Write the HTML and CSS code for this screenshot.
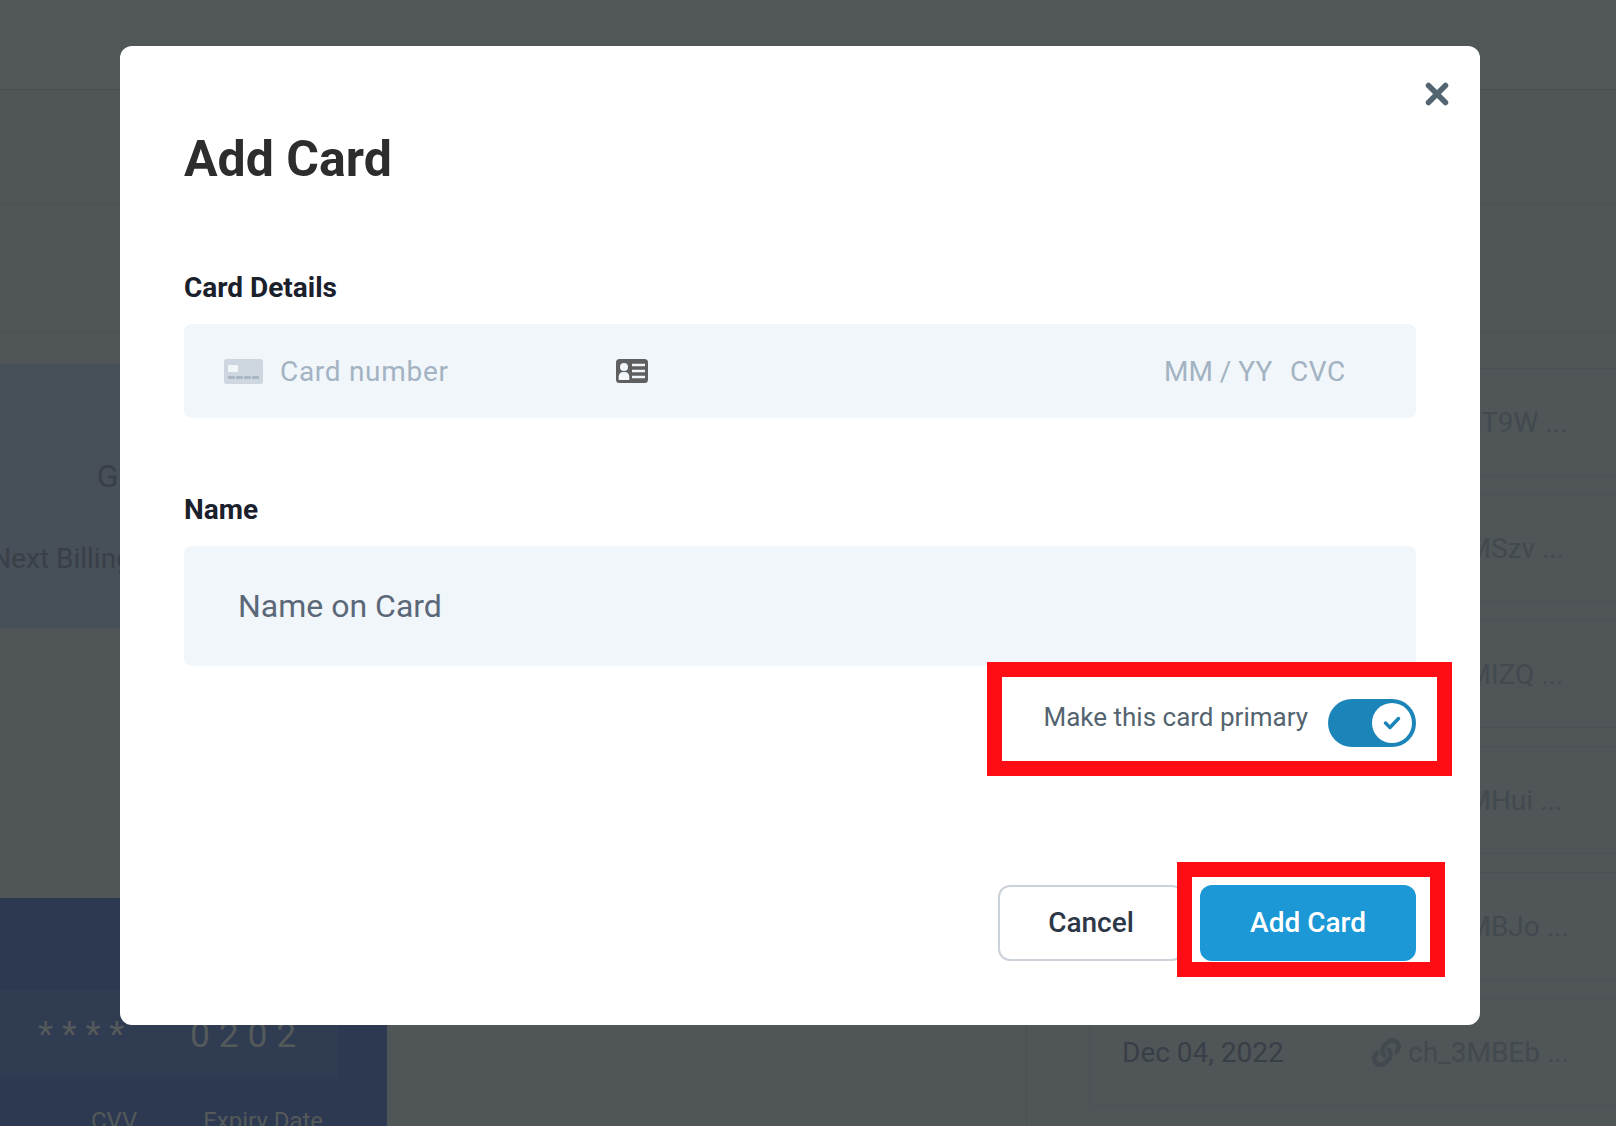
FILE: index.html
```html
<!DOCTYPE html>
<html lang="en">
<head>
<meta charset="utf-8">
<title>Add Card</title>
<link rel="stylesheet" href="styles.css">
</head>
<body>
<div class="page">
  <header class="topbar"></header>
  <div class="band band-one"></div>
  <div class="band band-two"></div>
  <main class="columns">
    <section class="left">
      <div class="plan">
        <div class="plan-name">Growth Plan</div>
        <div class="plan-next">Next Billing Date: Dec 04, 2022</div>
      </div>
      <div class="bank-card">
        <div class="card-digits"><span class="stars">* * * *</span><span class="last">0 2 0 2</span></div>
        <div class="card-meta"><span>CVV</span><span>Expiry Date</span></div>
      </div>
    </section>
    <section class="middle"></section>
    <section class="right">
      <div class="rows">
        <div class="row"><span class="date">Dec 04, 2022</span><span class="charge"><svg class="link" viewBox="0 0 512 512"><use href="#link-icon"/></svg>ch_3cT9W ...</span></div>
        <div class="row"><span class="date">Dec 04, 2022</span><span class="charge"><svg class="link" viewBox="0 0 512 512"><use href="#link-icon"/></svg>ch_3MSzv ...</span></div>
        <div class="row"><span class="date">Dec 04, 2022</span><span class="charge"><svg class="link" viewBox="0 0 512 512"><use href="#link-icon"/></svg>ch_3MIZQ ...</span></div>
        <div class="row"><span class="date">Dec 04, 2022</span><span class="charge"><svg class="link" viewBox="0 0 512 512"><use href="#link-icon"/></svg>ch_3MHui ...</span></div>
        <div class="row"><span class="date">Dec 04, 2022</span><span class="charge"><svg class="link" viewBox="0 0 512 512"><use href="#link-icon"/></svg>ch_3MBJo ...</span></div>
        <div class="row"><span class="date">Dec 04, 2022</span><span class="charge"><svg class="link" viewBox="0 0 512 512"><path id="link-icon" d="M326.612 185.391c59.747 59.809 58.927 155.698.36 214.59-.11.12-.24.25-.36.37l-67.2 67.2c-59.27 59.27-155.699 59.262-214.96 0-59.27-59.26-59.27-155.7 0-214.96l37.106-37.106c9.84-9.84 26.786-3.3 27.294 10.606.648 17.722 3.826 35.527 9.69 52.721 1.986 5.822.567 12.262-3.783 16.612l-13.087 13.087c-28.026 28.026-28.905 73.66-1.155 101.96 28.024 28.579 74.086 28.749 102.325.51l67.2-67.19c28.191-28.191 28.073-73.757 0-101.83-3.701-3.694-7.429-6.564-10.341-8.569a16.037 16.037 0 0 1-6.947-12.606c-.396-10.567 3.348-21.456 11.698-29.806l21.054-21.055c5.521-5.521 14.182-6.199 20.584-1.731a152.482 152.482 0 0 1 20.522 17.197zM467.547 44.449c-59.261-59.262-155.69-59.27-214.96 0l-67.2 67.2c-.12.12-.25.25-.36.37-58.566 58.892-59.387 154.781.36 214.59a152.454 152.454 0 0 0 20.521 17.196c6.402 4.468 15.064 3.789 20.584-1.731l21.054-21.055c8.35-8.35 12.094-19.239 11.698-29.806a16.037 16.037 0 0 0-6.947-12.606c-2.912-2.005-6.64-4.875-10.341-8.569-28.073-28.073-28.191-73.639 0-101.83l67.2-67.19c28.239-28.239 74.3-28.069 102.325.51 27.75 28.3 26.872 73.934-1.155 101.96l-13.087 13.087c-4.35 4.35-5.769 10.79-3.783 16.612 5.864 17.194 9.042 34.999 9.69 52.721.509 13.906 17.454 20.446 27.294 10.606l37.106-37.106c59.271-59.259 59.271-155.699.001-214.959z"/></svg>ch_3MBEb ...</span></div>
      </div>
    </section>
  </main>
</div>

<div class="overlay">
  <div class="modal">
    <svg class="close" viewBox="0 0 24 24"><path d="M3.500 3.500 20.500 20.500M20.500 3.500 3.500 20.500"/></svg>
    <h1 class="title">Add Card</h1>
    <div class="label label-card">Card Details</div>
    <div class="card-field">
      <svg class="brand" viewBox="0 0 39 25">
        <rect class="brand-bg" width="39" height="25" rx="2.500"/>
        <rect class="brand-chip" x="4" y="6" width="10" height="7" rx="0.500"/>
        <path class="brand-dash" d="M4 18.500h6.700M12 18.500h6.700M20 18.500h6.700M28 18.500h7"/>
      </svg>
      <span class="ph ph-number">Card number</span>
      <svg class="autofill" viewBox="0 0 32 24">
        <rect class="autofill-bg" width="32" height="24" rx="3.500"/>
        <circle class="autofill-fg" cx="8" cy="8" r="4"/>
        <path class="autofill-fg" d="M2.700 21v-3.500c0-2.500 2-4.500 4.500-4.500h1.600c2.500 0 4.500 2 4.500 4.500V21z"/>
        <path class="autofill-line" d="M16 6h13M16 12h13M16 18h13"/>
      </svg>
      <span class="ph ph-date">MM / YY</span>
      <span class="ph ph-cvc">CVC</span>
    </div>
    <div class="label label-name">Name</div>
    <div class="name-field">Name on Card</div>
    <div class="primary-row">
      <span class="primary-text">Make this card primary</span>
      <span class="toggle"><span class="knob"><svg class="tick" viewBox="0 0 18 14"><path d="M2.500 7 7 11.500 15.500 2.500"/></svg></span></span>
    </div>
    <div class="actions">
      <button class="btn btn-cancel" type="button">Cancel</button>
      <button class="btn btn-add" type="button">Add Card</button>
    </div>
    <div class="mark mark-primary"></div>
    <div class="mark mark-add"></div>
  </div>
</div>
</body>
</html>
```
FILE: styles.css
```css
* { box-sizing: border-box; }
html, body { margin: 0; padding: 0; height: 100%; overflow: hidden; }
body { font-family: Roboto, "Liberation Sans", sans-serif; background: #505558; color: #383f47; }

.page { width: 1616px; height: 1126px; display: flex; flex-direction: column; overflow: hidden; }
.topbar { height: 90px; flex: none; background: #515659; border-bottom: 1px solid #4b5053; }
.band { flex: none; border-bottom: 1px solid #4b5053; background: #505558; }
.band-one { height: 115px; }
.band-two { height: 127px; }

.columns { flex: 1; display: flex; min-height: 0; }
.left { width: 387px; flex: none; padding-top: 32px; display: flex; flex-direction: column; }
.plan { height: 264px; background: #475058; display: flex; flex-direction: column; align-items: center; white-space: nowrap; }
.plan-name { font-size: 32px; line-height: 38px; margin-top: 93px; padding-right: 20px; }
.plan-next { font-size: 28px; line-height: 34px; margin-top: 47px; padding-right: 24px; }
.bank-card { flex: 1; margin-top: 270px; background: #2d3950; padding-top: 92px; color: #54595a; overflow: hidden; }
.card-digits { height: 89px; width: 339px; background: #303c52; display: flex; align-items: center; white-space: nowrap; }
.stars { font-size: 35px; width: 190px; padding-left: 38px; }
.last { font-size: 35.500px; }
.card-meta { display: flex; font-size: 24px; line-height: 30px; margin-top: 27px; padding-left: 91px; gap: 66px; }

.middle { flex: none; width: 640px; border-right: 1px solid #4b5053; }
.right { flex: 1; padding: 36px 0 0 62px; min-width: 0; }
.rows { display: flex; flex-direction: column; gap: 18px; margin-right: -40px; }
.row { height: 108px; flex: none; display: flex; align-items: center; padding-left: 32px; border: 1px solid #4b5054; border-radius: 8px; font-size: 28px; white-space: nowrap; }
.date { width: 250px; flex: none; }
.charge { display: flex; align-items: center; gap: 7px; color: #42494f; }
.link { width: 29px; height: 29px; fill: #42494f; }

.overlay { position: absolute; inset: 0; padding: 46px 0 0 120px; }
.modal { position: relative; width: 1360px; height: 979px; background: #fff; border-radius: 12px; padding: 0 64px; display: flex; flex-direction: column; }
.close { position: absolute; top: 36px; right: 31px; width: 24px; height: 24px; fill: none; stroke: #526570; stroke-width: 5.500; stroke-linecap: round; }
.title { margin: 85px 0 0; font-size: 50px; line-height: 56px; font-weight: 700; color: #2d2d2d; }
.label { font-size: 28px; line-height: 32px; font-weight: 700; color: #1a202c; }
.label-card { margin-top: 85px; }
.label-name { margin-top: 76px; }
.card-field { margin-top: 20px; height: 94px; background: #f1f6fb; border-radius: 8px; display: flex; align-items: center; padding-left: 40px; }
.brand { width: 39px; height: 25px; flex: none; }
.brand-bg { fill: #ced6df; }
.brand-chip { fill: #f3f6f9; }
.brand-dash { stroke: #a9b6c4; stroke-width: 3; fill: none; }
.ph { font-size: 28px; color: #a3b3c2; white-space: nowrap; }
.ph-number { margin-left: 17px; width: 336px; flex: none; letter-spacing: 0.7px; }
.autofill { width: 32px; height: 24px; flex: none; }
.autofill-bg { fill: #5f5f5f; }
.autofill-fg { fill: #f1f6fb; }
.autofill-line { stroke: #f1f6fb; stroke-width: 2.500; fill: none; }
.ph-date { margin-left: 516px; width: 126px; flex: none; }
.ph-cvc { letter-spacing: 0.6px; }
.name-field { margin-top: 20px; height: 120px; background: #f1f6fb; border-radius: 8px; display: flex; align-items: center; padding-left: 54px; font-size: 32px; color: #5b6878; }
.primary-row { margin-top: 33px; display: flex; justify-content: flex-end; gap: 20px; align-items: center; }
.primary-text { font-size: 26px; line-height: 30px; color: #54646f; position: relative; top: -6px; }
.toggle { width: 88px; height: 48px; background: #1b84b8; border-radius: 24px; display: flex; align-items: center; justify-content: flex-end; padding-right: 4px; }
.knob { width: 40px; height: 40px; border-radius: 50%; background: #fff; display: flex; align-items: center; justify-content: center; }
.tick { width: 18px; height: 14px; fill: none; stroke: #1b84b8; stroke-width: 3.500; stroke-linecap: round; stroke-linejoin: round; }
.actions { margin-top: 138px; display: flex; justify-content: flex-end; gap: 16px; }
.btn { height: 76px; border-radius: 12px; font-family: inherit; font-size: 28px; font-weight: 500; padding: 0 0 2px; }
.btn-cancel { width: 186px; background: #fff; border: 2px solid #cbd2d9; color: #2d3748; }
.btn-add { width: 216px; background: #1b98d5; border: 0; color: #fff; }
.mark { position: absolute; border: 15px solid #ff0d14; pointer-events: none; }
.mark-primary { left: 867px; top: 616px; width: 465px; height: 114px; }
.mark-add { left: 1057px; top: 816px; width: 268px; height: 115px; }
```
